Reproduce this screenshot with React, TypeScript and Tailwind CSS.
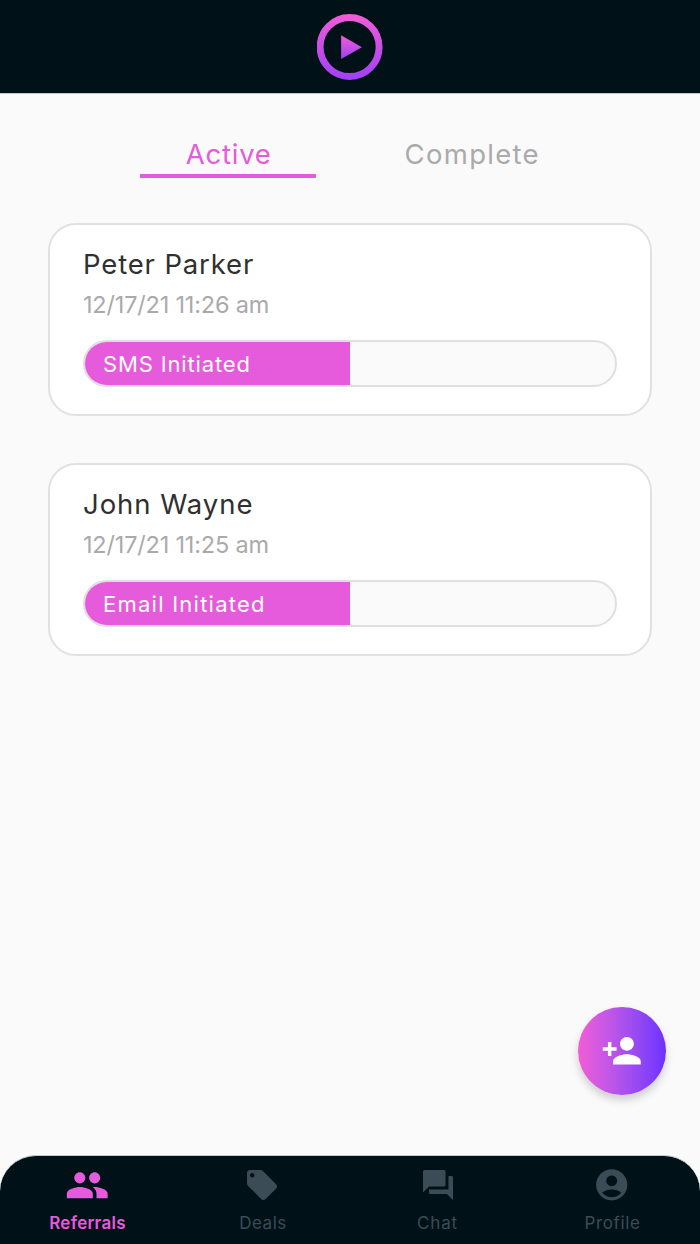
import { clsx } from "clsx";
import {
  MdAccountCircle,
  MdLocalOffer,
  MdPeople,
  MdPersonAdd,
  MdQuestionAnswer,
} from "react-icons/md";

const REFERRALS = [
  {
    id: 1,
    name: "Peter Parker",
    date: "12/17/21 11:26 am",
    status: "SMS Initiated",
    progress: 50,
    nameClass: "tracking-[0.85px]",
    statusClass: "tracking-[0.85px]",
  },
  {
    id: 2,
    name: "John Wayne",
    date: "12/17/21 11:25 am",
    status: "Email Initiated",
    progress: 50,
    nameClass: "tracking-[0.95px]",
    statusClass: "tracking-[1.25px]",
  },
];

const NAV_ITEMS = [
  {
    label: "Referrals",
    icon: MdPeople,
    size: 44.5,
    iconClass: "pt-px pr-px",
    labelClass: "font-semibold tracking-[0.25px]",
  },
  {
    label: "Deals",
    icon: MdLocalOffer,
    size: 36,
    iconClass: "pr-px",
    labelClass: "pl-px tracking-[0.5px]",
  },
  {
    label: "Chat",
    icon: MdQuestionAnswer,
    size: 36,
    iconClass: "",
    labelClass: "tracking-[0.9px]",
  },
  {
    label: "Profile",
    icon: MdAccountCircle,
    size: 37.5,
    iconClass: "pr-[2px]",
    labelClass: "tracking-[0.65px]",
  },
];

function Logo() {
  return (
    <svg width="66" height="66" viewBox="0 0 66 66" fill="none">
      <defs>
        <linearGradient id="ring" x1="0" y1="0" x2="0" y2="66" gradientUnits="userSpaceOnUse">
          <stop stopColor="#f25cd8" />
          <stop offset="1" stopColor="#a040f4" />
        </linearGradient>
        <linearGradient id="play" x1="0" y1="21" x2="0" y2="45" gradientUnits="userSpaceOnUse">
          <stop stopColor="#f25cd8" />
          <stop offset="1" stopColor="#a040f4" />
        </linearGradient>
      </defs>
      <circle cx="32.6" cy="33" r="29.5" stroke="url(#ring)" strokeWidth="6.9" />
      <path d="M24.1 21.3 44.9 33.2 24.1 45.1z" fill="url(#play)" />
    </svg>
  );
}

function ReferralCard({ referral }: { referral: (typeof REFERRALS)[number] }) {
  return (
    <article className="h-[193px] rounded-[28px] border-2 border-[#e1e1e1] bg-white px-[33px] pt-6">
      <h2 className={clsx("text-[27.5px] leading-[30px] text-[#303030]", referral.nameClass)}>
        {referral.name}
      </h2>
      <p className="mt-2.5 text-[23.5px] leading-8 tracking-[-0.19px] text-[#aaaaaa]">
        {referral.date}
      </p>
      <div className="mt-[19px] h-[47px] overflow-hidden rounded-full border-2 border-[#dfdfdf] bg-[#fafafa]">
        <div
          className="flex h-full items-center bg-[#e65adc] pt-[2px] pl-[18px]"
          style={{ width: `${referral.progress}%` }}
        >
          <span
            className={clsx("whitespace-nowrap text-[22px] text-white", referral.statusClass)}
          >
            {referral.status}
          </span>
        </div>
      </div>
    </article>
  );
}

export default function App() {
  return (
    <div className="relative flex h-[1244px] w-[700px] flex-col overflow-hidden bg-[#fafafa] font-['Inter',sans-serif]">
      <header className="flex h-[94px] shrink-0 justify-center border-b border-[#c4c9ca] bg-[#001218] pt-[14px]">
        <Logo />
      </header>

      <div className="mt-[45px] flex justify-center">
        <button className="flex w-[243.5px] flex-col items-center text-[27.5px] leading-[30px] text-[#e65adc]">
          <span className="pl-px tracking-[0.75px]">Active</span>
          <span className="mt-[5px] h-[3.5px] w-44 bg-[#e65adc]" />
        </button>
        <button className="flex w-[243.5px] flex-col items-center text-[27.5px] leading-[30px] text-[#aaaaaa]">
          <span className="pl-px tracking-[1.3px]">Complete</span>
        </button>
      </div>

      <main className="mt-[45.5px] flex flex-1 flex-col gap-[47px] px-12">
        {REFERRALS.map((referral) => (
          <ReferralCard key={referral.id} referral={referral} />
        ))}
      </main>

      <button
        aria-label="Add referral"
        className="absolute right-[34px] bottom-[149px] flex size-[88px] items-center justify-center rounded-full bg-linear-to-r from-[#f25cd6] to-[#6e2eff] text-white shadow-[0_5px_9px_rgba(0,0,0,0.18)]"
      >
        <MdPersonAdd size={41.5} />
      </button>

      <nav className="grid h-[89px] shrink-0 grid-cols-4 rounded-t-[36px] border-t border-[#c4cccc] bg-[#001218]">
        {NAV_ITEMS.map(({ label, icon: Icon, size, iconClass, labelClass }, i) => (
          <button
            key={label}
            className={clsx(
              "flex flex-col items-center",
              i === 0 ? "text-[#e65adc]" : "text-[#3b4c56]",
            )}
          >
            <span className={clsx("mt-1 flex h-[50px] items-center", iconClass)}>
              <Icon size={size} />
            </span>
            <span className={clsx("mt-[3px] text-[17px] leading-5", labelClass)}>{label}</span>
          </button>
        ))}
      </nav>
    </div>
  );
}
